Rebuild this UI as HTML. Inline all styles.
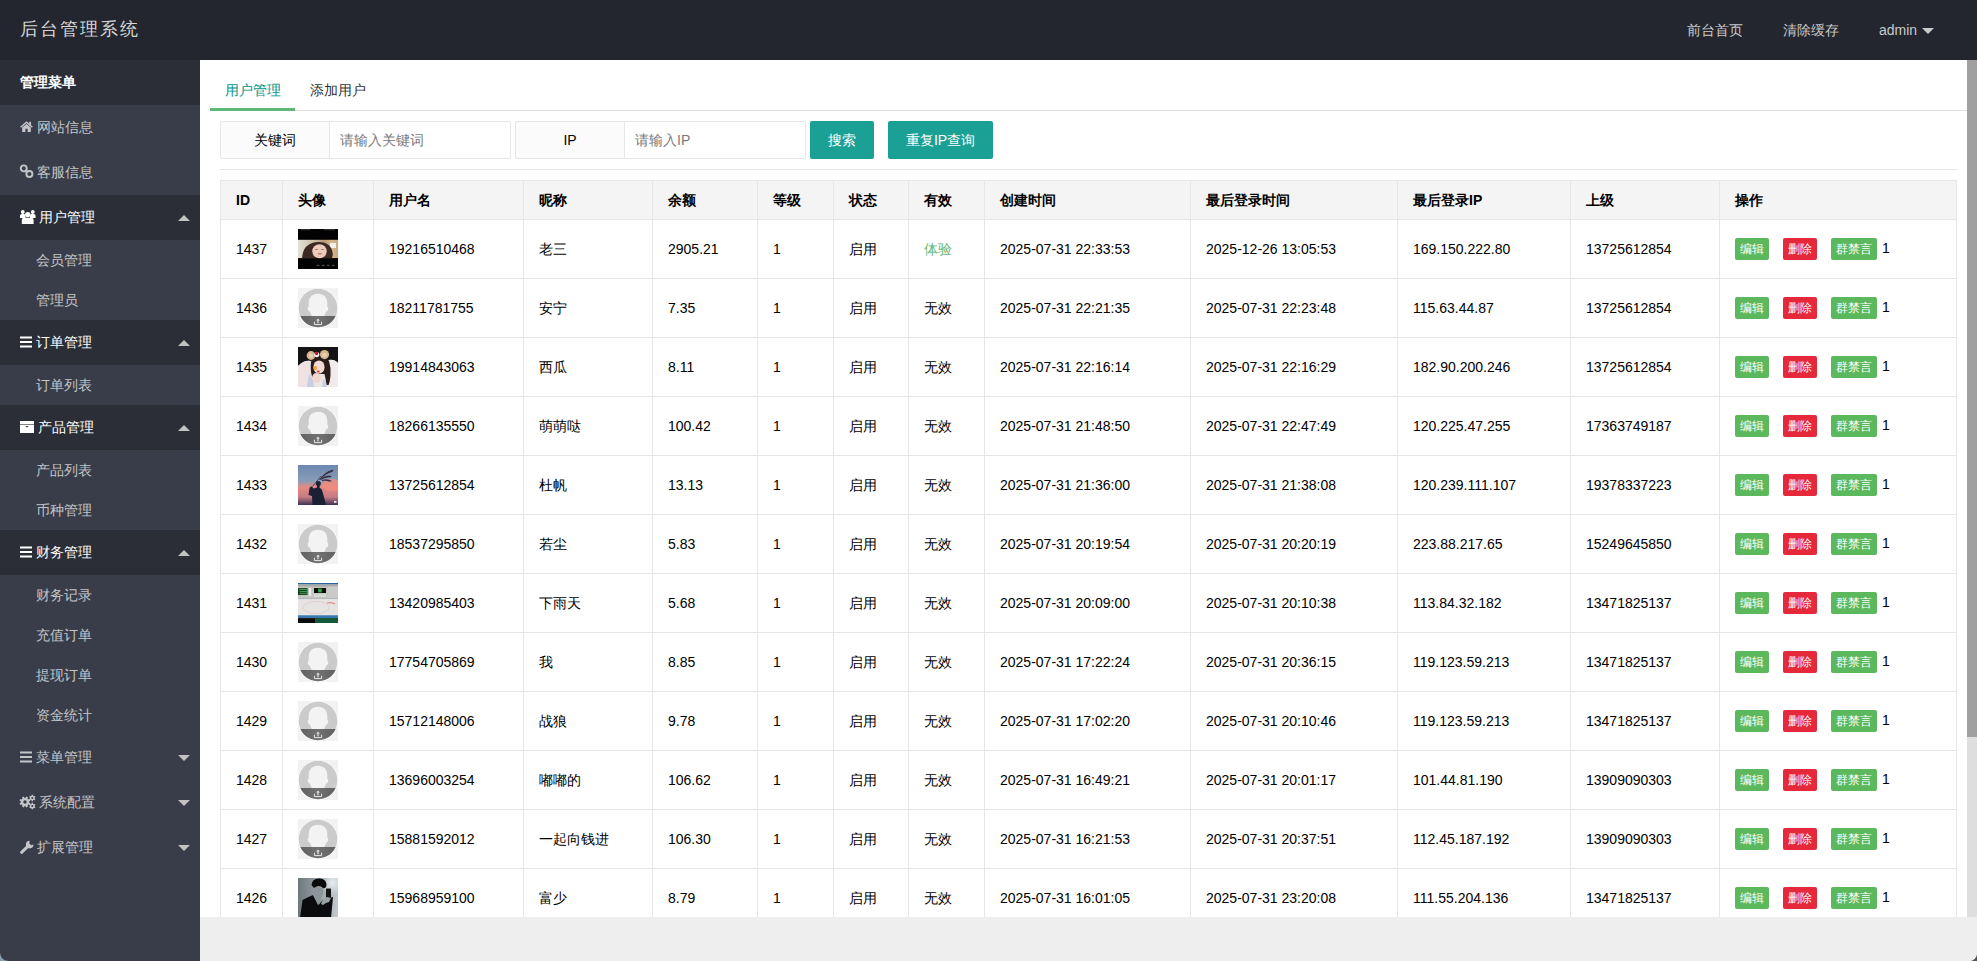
<!DOCTYPE html>
<html><head><meta charset="utf-8">
<style>
*{margin:0;padding:0;box-sizing:border-box}
html,body{width:1977px;height:961px;overflow:hidden;background:linear-gradient(to right,#8aa0b4 0,#8aa0b4 50%,#555 50%,#555 100%)}
body{font-family:"Liberation Sans",sans-serif;font-size:14px;color:#333;position:relative}
#win{position:absolute;left:0;top:0;width:1977px;height:961px;overflow:hidden;border-radius:0 0 8px 8px;background:#eee}
#hdr{position:absolute;left:0;top:0;width:1977px;height:60px;background:#23262e}
#logo{position:absolute;left:20px;top:17px;font-size:18px;letter-spacing:2px;color:#d6d6d6;line-height:24px;white-space:nowrap}
.hn{position:absolute;top:20px;line-height:20px;color:#c9cacc;font-size:14px;white-space:nowrap}
#side{position:absolute;left:0;top:60px;width:200px;height:901px;background:#393d49}
.si{position:absolute;left:0;width:200px;color:#c4c5c8;line-height:20px;white-space:nowrap}
.si.dk{background:#2b2e37;color:#fff}
.si span{position:absolute;top:0}
.ico{position:absolute}
.tri{position:absolute;width:0;height:0;border-left:6px solid transparent;border-right:6px solid transparent}
#body{position:absolute;left:200px;top:60px;width:1767px;height:857px;background:#fff;overflow:hidden}
.hl{position:absolute;left:20px;width:1737px;height:1px;background:#e6e6e6}
.vl{position:absolute;top:120px;width:1px;height:740px;background:#e6e6e6}
.th{position:absolute;line-height:20px;font-weight:bold;color:#000;white-space:nowrap}
.td{position:absolute;line-height:20px;color:#000;white-space:nowrap}
.av{position:absolute;width:40px;height:40px;line-height:0;overflow:hidden}

.btn{position:absolute;height:22px;line-height:22px;font-size:12px;color:#fff;text-align:center;border-radius:2px;white-space:nowrap}
.btn.g{background:#5cb85c}
.btn.r{background:#e5283a}
.fbox{position:absolute;top:61px;height:38px;border:1px solid #e6e6e6;border-radius:2px;background:#fff}
.flab{position:absolute;top:61px;height:38px;width:110px;border:1px solid #e6e6e6;border-radius:2px 0 0 2px;background:#fbfbfb;text-align:center;line-height:36px;color:#000}
.ph{position:absolute;top:0;left:10px;line-height:36px;color:#7a7a7a;white-space:nowrap}
.sbtn{position:absolute;top:61px;height:38px;line-height:38px;background:#1aa094;color:#fff;text-align:center;border-radius:2px;white-space:nowrap}
#sb{position:absolute;left:1967px;top:60px;width:10px;height:857px;background:#dedede}
#thumb{position:absolute;left:0;top:0;width:10px;height:677px;background:#a0a0a0}
#foot{position:absolute;left:200px;top:917px;width:1777px;height:44px;background:#eeeeee}
</style></head><body>
<div id="win">
<div id="hdr">
  <div id="logo">后台管理系统</div>
  <div class="hn" style="left:1687px">前台首页</div>
  <div class="hn" style="left:1783px">清除缓存</div>
  <div class="hn" style="left:1879px">admin</div>
  <div class="tri" style="left:1922px;top:28px;border-top:6px solid #c9cacc"></div>
</div>
<div id="side">
  <div class="si dk" style="top:0;height:45px;color:#fff"><span style="left:20px;top:12px;font-weight:bold">管理菜单</span></div>
  <div class="si" style="top:45px;height:45px">
    <svg class="ico" style="left:20px;top:16px;overflow:visible" width="13" height="11" viewBox="0 0 13 11"><path d="M0.6 6.2 L6.5 1.2 L12.4 6.2" stroke="#c4c5c8" stroke-width="1.5" fill="none"/><rect x="9.2" y="0.8" width="1.8" height="3.6" fill="#c4c5c8"/><path d="M2.2 6.6 L6.5 3 L10.8 6.6 L10.8 11 L7.6 11 L7.6 7.8 L5.4 7.8 L5.4 11 L2.2 11 Z" fill="#c4c5c8"/></svg>
    <span style="left:37px;top:12px">网站信息</span></div>
  <div class="si" style="top:90px;height:45px">
    <svg class="ico" style="left:20px;top:15px;overflow:visible" width="13" height="13" viewBox="0 0 13 13"><g fill="none" stroke="#c4c5c8" stroke-width="1.9"><circle cx="3.75" cy="3.4" r="3"/><circle cx="9.4" cy="9" r="3"/></g></svg>
    <span style="left:37px;top:12px">客服信息</span></div>
  <div class="si dk" style="top:135px;height:45px">
    <svg class="ico" style="left:20px;top:15px;overflow:visible" width="16" height="14" viewBox="0 0 16 14"><g fill="#fff"><circle cx="2.8" cy="2" r="1.9"/><circle cx="12.8" cy="2" r="1.9"/><path d="M0 8 V6 Q0 4 2 4 H4 Q5.5 4 5.5 6 V8 Z"/><path d="M10 8 V6 Q10 4 11.5 4 H13.6 Q15.6 4 15.6 6 V8 Z"/><circle cx="7.8" cy="4.6" r="2.7"/><path d="M1.8 14 V10 Q1.8 7.8 4 7.8 H11.6 Q13.6 7.8 13.6 10 V14 Z"/></g></svg>
    <span style="left:39px;top:12px">用户管理</span>
    <div class="tri" style="left:178px;top:20px;border-bottom:6px solid #c2c2c2"></div></div>
  <div class="si" style="top:180px;height:40px"><span style="left:36px;top:10px">会员管理</span></div>
  <div class="si" style="top:220px;height:40px"><span style="left:36px;top:10px">管理员</span></div>
  <div class="si dk" style="top:260px;height:45px">
    <svg class="ico" style="left:20px;top:16px" width="12" height="12" viewBox="0 0 12 12"><g fill="#fff"><rect y="0.5" width="12" height="2"/><rect y="5" width="12" height="2"/><rect y="9.5" width="12" height="2"/></g></svg>
    <span style="left:36px;top:12px">订单管理</span>
    <div class="tri" style="left:178px;top:20px;border-bottom:6px solid #c2c2c2"></div></div>
  <div class="si" style="top:305px;height:40px"><span style="left:36px;top:10px">订单列表</span></div>
  <div class="si dk" style="top:345px;height:45px">
    <svg class="ico" style="left:20px;top:16px" width="14" height="12" viewBox="0 0 14 12"><g fill="#fff"><rect x="0" y="0" width="14" height="3"/><rect x="0" y="3.6" width="14" height="8.4"/></g><ellipse cx="7" cy="5.6" rx="1.4" ry="0.6" fill="#2b2e37"/></svg>
    <span style="left:38px;top:12px">产品管理</span>
    <div class="tri" style="left:178px;top:20px;border-bottom:6px solid #c2c2c2"></div></div>
  <div class="si" style="top:390px;height:40px"><span style="left:36px;top:10px">产品列表</span></div>
  <div class="si" style="top:430px;height:40px"><span style="left:36px;top:10px">币种管理</span></div>
  <div class="si dk" style="top:470px;height:45px">
    <svg class="ico" style="left:20px;top:16px" width="12" height="12" viewBox="0 0 12 12"><g fill="#fff"><rect y="0.5" width="12" height="2"/><rect y="5" width="12" height="2"/><rect y="9.5" width="12" height="2"/></g></svg>
    <span style="left:36px;top:12px">财务管理</span>
    <div class="tri" style="left:178px;top:20px;border-bottom:6px solid #c2c2c2"></div></div>
  <div class="si" style="top:515px;height:40px"><span style="left:36px;top:10px">财务记录</span></div>
  <div class="si" style="top:555px;height:40px"><span style="left:36px;top:10px">充值订单</span></div>
  <div class="si" style="top:595px;height:40px"><span style="left:36px;top:10px">提现订单</span></div>
  <div class="si" style="top:635px;height:40px"><span style="left:36px;top:10px">资金统计</span></div>
  <div class="si" style="top:675px;height:45px">
    <svg class="ico" style="left:20px;top:16px" width="12" height="12" viewBox="0 0 12 12"><g fill="#c4c5c8"><rect y="0.5" width="12" height="2"/><rect y="5" width="12" height="2"/><rect y="9.5" width="12" height="2"/></g></svg>
    <span style="left:36px;top:12px">菜单管理</span>
    <div class="tri" style="left:178px;top:20px;border-top:6px solid #c2c2c2"></div></div>
  <div class="si" style="top:720px;height:45px">
    <svg class="ico" style="left:20px;top:16px;overflow:visible" width="16" height="12" viewBox="0 0 16 12"><g fill="#c4c5c8"><path d="M9.30 6.00 L9.25 6.67 L10.45 7.31 L9.77 8.93 L8.48 8.53 L8.04 9.04 L7.53 9.48 L7.93 10.77 L6.31 11.45 L5.67 10.25 L5.00 10.30 L4.33 10.25 L3.69 11.45 L2.07 10.77 L2.47 9.48 L1.96 9.04 L1.52 8.53 L0.23 8.93 L-0.45 7.31 L0.75 6.67 L0.70 6.00 L0.75 5.33 L-0.45 4.69 L0.23 3.07 L1.52 3.47 L1.96 2.96 L2.47 2.52 L2.07 1.23 L3.69 0.55 L4.33 1.75 L5.00 1.70 L5.67 1.75 L6.31 0.55 L7.93 1.23 L7.53 2.52 L8.04 2.96 L8.48 3.47 L9.77 3.07 L10.45 4.69 L9.25 5.33 Z M5 4.3 A1.7 1.7 0 1 0 5 7.7 A1.7 1.7 0 1 0 5 4.3 Z" fill-rule="evenodd"/><path d="M14.70 2.00 L14.65 2.50 L15.44 3.02 L14.75 4.21 L13.91 3.78 L13.50 4.08 L13.04 4.28 L12.99 5.23 L11.61 5.23 L11.56 4.28 L11.10 4.08 L10.69 3.78 L9.85 4.21 L9.16 3.02 L9.95 2.50 L9.90 2.00 L9.95 1.50 L9.16 0.98 L9.85 -0.21 L10.69 0.22 L11.10 -0.08 L11.56 -0.28 L11.61 -1.23 L12.99 -1.23 L13.04 -0.28 L13.50 -0.08 L13.91 0.22 L14.75 -0.21 L15.44 0.98 L14.65 1.50 Z M12.3 1 A1 1 0 1 0 12.3 3 A1 1 0 1 0 12.3 1 Z" fill-rule="evenodd"/><path d="M14.70 10.10 L14.65 10.60 L15.44 11.12 L14.75 12.31 L13.91 11.88 L13.50 12.18 L13.04 12.38 L12.99 13.33 L11.61 13.33 L11.56 12.38 L11.10 12.18 L10.69 11.88 L9.85 12.31 L9.16 11.12 L9.95 10.60 L9.90 10.10 L9.95 9.60 L9.16 9.08 L9.85 7.89 L10.69 8.32 L11.10 8.02 L11.56 7.82 L11.61 6.87 L12.99 6.87 L13.04 7.82 L13.50 8.02 L13.91 8.32 L14.75 7.89 L15.44 9.08 L14.65 9.60 Z M12.3 9.1 A1 1 0 1 0 12.3 11.1 A1 1 0 1 0 12.3 9.1 Z" fill-rule="evenodd"/></g></svg>
    <span style="left:39px;top:12px">系统配置</span>
    <div class="tri" style="left:178px;top:20px;border-top:6px solid #c2c2c2"></div></div>
  <div class="si" style="top:765px;height:45px">
    <svg class="ico" style="left:20px;top:15px;overflow:visible" width="14" height="14" viewBox="0 0 14 14"><path d="M1.6 12.3 L7.8 6.4" stroke="#c4c5c8" stroke-width="3" stroke-linecap="round"/><path d="M9.7 0.8 A3.8 3.8 0 1 0 13.5 4.6 L11.2 5.2 L9.2 3.2 Z" fill="#c4c5c8"/></svg>
    <span style="left:37px;top:12px">扩展管理</span>
    <div class="tri" style="left:178px;top:20px;border-top:6px solid #c2c2c2"></div></div>
</div>
<div id="body">
  <div style="position:absolute;left:25px;top:20px;line-height:20px;color:#009688">用户管理</div>
  <div style="position:absolute;left:110px;top:20px;line-height:20px;color:#333">添加用户</div>
  <div style="position:absolute;left:10px;top:50px;width:1757px;height:1px;background:#e2e2e2"></div>
  <div style="position:absolute;left:10px;top:48px;width:85px;height:3px;background:#5fb878"></div>

  <div class="fbox" style="left:20px;width:291px"></div>
  <div class="flab" style="left:20px">关键词</div>
  <div class="fbox" style="left:129px;width:182px;border-radius:0 2px 2px 0"><div class="ph">请输入关键词</div></div>
  <div class="fbox" style="left:315px;width:291px"></div>
  <div class="flab" style="left:315px">IP</div>
  <div class="fbox" style="left:424px;width:182px;border-radius:0 2px 2px 0"><div class="ph">请输入IP</div></div>
  <div class="sbtn" style="left:610px;width:64px">搜索</div>
  <div class="sbtn" style="left:688px;width:105px">重复IP查询</div>
  <div style="position:absolute;left:20px;top:109px;width:1737px;height:1px;background:#e6e6e6"></div>
<div style="position:absolute;left:20px;top:120px;width:1737px;height:40px;background:#f4f4f4"></div>
<div class="th" style="left:36px;top:130px">ID</div>
<div class="th" style="left:98px;top:130px">头像</div>
<div class="th" style="left:189px;top:130px">用户名</div>
<div class="th" style="left:339px;top:130px">昵称</div>
<div class="th" style="left:468px;top:130px">余额</div>
<div class="th" style="left:573px;top:130px">等级</div>
<div class="th" style="left:649px;top:130px">状态</div>
<div class="th" style="left:724px;top:130px">有效</div>
<div class="th" style="left:800px;top:130px">创建时间</div>
<div class="th" style="left:1006px;top:130px">最后登录时间</div>
<div class="th" style="left:1213px;top:130px">最后登录IP</div>
<div class="th" style="left:1386px;top:130px">上级</div>
<div class="th" style="left:1535px;top:130px">操作</div>
<div class="td" style="left:36px;top:179px;">1437</div>
<div class="av" style="left:98px;top:169px"><svg class="ph40" width="40" height="40" viewBox="0 0 40 40"><rect width="40" height="40" fill="#020202"/><defs><linearGradient id="g1" x1="0" x2="1"><stop offset="0" stop-color="#e2e0d6"/><stop offset="0.35" stop-color="#cfc4ae"/><stop offset="0.65" stop-color="#b89a78"/><stop offset="0.85" stop-color="#d8b88a"/><stop offset="1" stop-color="#c8a880"/></linearGradient></defs><rect y="10.8" width="40" height="18.3" fill="url(#g1)"/><rect x="32" y="14" width="6" height="5" fill="#f2f0ea"/><path d="M4 29.1 Q5 20 9 17 Q14 12.5 22 13 Q30 13.5 33 19 Q36 24 34 29.1 Z" fill="#3c2a22"/><ellipse cx="21.5" cy="22.3" rx="7.2" ry="7" fill="#eccabc"/><ellipse cx="18.5" cy="20.5" rx="1.3" ry="0.6" fill="#8a6a60"/><ellipse cx="24.5" cy="20.5" rx="1.3" ry="0.6" fill="#8a6a60"/><ellipse cx="21.8" cy="24.8" rx="2.2" ry="1" fill="#c98c84"/><rect x="3" y="0.3" width="9" height="0.9" fill="#444"/><rect x="26" y="0.3" width="11" height="0.9" fill="#444"/><g fill="#4a4a4a"><rect x="18.5" y="35.7" width="3" height="1.3" rx="0.6"/><rect x="23.8" y="35.7" width="3" height="1.3" rx="0.6"/><rect x="28.8" y="35.7" width="3" height="1.3" rx="0.6"/><rect x="33.8" y="35.7" width="3" height="1.3" rx="0.6"/></g></svg></div>
<div class="td" style="left:189px;top:179px;">19216510468</div>
<div class="td" style="left:339px;top:179px;">老三</div>
<div class="td" style="left:468px;top:179px;">2905.21</div>
<div class="td" style="left:573px;top:179px;">1</div>
<div class="td" style="left:649px;top:179px;">启用</div>
<div class="td" style="left:724px;top:179px;color:#5FB878;">体验</div>
<div class="td" style="left:800px;top:179px;">2025-07-31 22:33:53</div>
<div class="td" style="left:1006px;top:179px;">2025-12-26 13:05:53</div>
<div class="td" style="left:1213px;top:179px;">169.150.222.80</div>
<div class="td" style="left:1386px;top:179px;">13725612854</div>
<div class="btn g" style="left:1535px;top:178px;width:34px">编辑</div>
<div class="btn r" style="left:1583px;top:178px;width:34px">删除</div>
<div class="btn g" style="left:1631px;top:178px;width:46px">群禁言</div>
<div class="td" style="left:1682px;top:178px">1</div>
<div class="td" style="left:36px;top:238px;">1436</div>
<div class="av" style="left:98px;top:228px"><svg width="40" height="40" viewBox="0 0 40 40"><rect width="40" height="40" fill="#f2f2f2"/><circle cx="20" cy="20" r="20" fill="#fafafa"/><defs><clipPath id="cc"><circle cx="20" cy="20" r="19.3"/></clipPath><linearGradient id="bd" x1="0" x2="1"><stop offset="0" stop-color="#5e5e5e"/><stop offset="0.5" stop-color="#727272"/><stop offset="1" stop-color="#5e5e5e"/></linearGradient></defs><g clip-path="url(#cc)"><rect width="40" height="40" fill="#cbcbcb"/><path d="M20 5.7 C26 5.7 29.3 9.5 29.3 15 L29.3 18.5 Q30.6 19 30.2 21.5 Q29.7 23.6 28.2 23.6 Q27.2 26.5 26.2 28 L13.8 28 Q12.8 26.5 11.8 23.6 Q10.3 23.6 9.8 21.5 Q9.4 19 10.7 18.5 L10.7 15 C10.7 9.5 14 5.7 20 5.7 Z" fill="#f3f3f3"/><rect y="28" width="40" height="12" fill="url(#bd)"/><path d="M16.4 33.8 v2.8 h7.2 v-2.8" stroke="#e6e6e6" stroke-width="1" fill="none"/><path d="M20 35.2 v-3.6" stroke="#e6e6e6" stroke-width="1.2"/><path d="M18.1 32.6 L20 30.7 L21.9 32.6 Z" fill="#e6e6e6"/></g></svg></div>
<div class="td" style="left:189px;top:238px;">18211781755</div>
<div class="td" style="left:339px;top:238px;">安宁</div>
<div class="td" style="left:468px;top:238px;">7.35</div>
<div class="td" style="left:573px;top:238px;">1</div>
<div class="td" style="left:649px;top:238px;">启用</div>
<div class="td" style="left:724px;top:238px;">无效</div>
<div class="td" style="left:800px;top:238px;">2025-07-31 22:21:35</div>
<div class="td" style="left:1006px;top:238px;">2025-07-31 22:23:48</div>
<div class="td" style="left:1213px;top:238px;">115.63.44.87</div>
<div class="td" style="left:1386px;top:238px;">13725612854</div>
<div class="btn g" style="left:1535px;top:237px;width:34px">编辑</div>
<div class="btn r" style="left:1583px;top:237px;width:34px">删除</div>
<div class="btn g" style="left:1631px;top:237px;width:46px">群禁言</div>
<div class="td" style="left:1682px;top:237px">1</div>
<div class="td" style="left:36px;top:297px;">1435</div>
<div class="av" style="left:98px;top:287px"><svg class="ph40" width="40" height="40" viewBox="0 0 40 40"><rect width="40" height="40" fill="#f0e6e6"/><path d="M0 0 H40 V16 Q36 12 32 13 L12 14 Q6 13 0 19 Z" fill="#141414"/><path d="M0 19 Q6 13 13 14 L15 40 H0 Z" fill="#eee2e2"/><path d="M40 16 Q36 12 30 13 L29 40 H40 Z" fill="#f3eaec"/><path d="M13 15 Q14 10 20 10 Q29 10 31 14 Q33 20 32.5 28 Q32 35 30.5 38 L28.5 38 Q27.5 31 26.5 27 L16 27 Q16 30 14.5 31 Q12 24 13 15 Z" fill="#2a1c1b"/><circle cx="13" cy="8.5" r="4.4" fill="#d6b68e"/><circle cx="26.5" cy="7.6" r="4.6" fill="#d6b68e"/><circle cx="13" cy="8.8" r="2.2" fill="#e4d0b4"/><circle cx="26.5" cy="8" r="2.3" fill="#e4d0b4"/><circle cx="18.8" cy="7.6" r="2.6" fill="#f2eeee"/><circle cx="18.6" cy="6.4" r="1.7" fill="#c41428"/><ellipse cx="21" cy="20" rx="5.6" ry="6.6" fill="#f3dad2"/><circle cx="17.3" cy="21" r="1.9" fill="#f0a048"/><ellipse cx="20.3" cy="24.6" rx="1.5" ry="1" fill="#d44434"/><ellipse cx="18.5" cy="31" rx="4.5" ry="5" fill="#f0d6ce"/><path d="M9 40 L11 27 Q14 30 15 34 L16 40 Z" fill="#c4cee6"/><path d="M24 40 L25 32 Q28 33 29 40 Z" fill="#c8d2e6"/></svg></div>
<div class="td" style="left:189px;top:297px;">19914843063</div>
<div class="td" style="left:339px;top:297px;">西瓜</div>
<div class="td" style="left:468px;top:297px;">8.11</div>
<div class="td" style="left:573px;top:297px;">1</div>
<div class="td" style="left:649px;top:297px;">启用</div>
<div class="td" style="left:724px;top:297px;">无效</div>
<div class="td" style="left:800px;top:297px;">2025-07-31 22:16:14</div>
<div class="td" style="left:1006px;top:297px;">2025-07-31 22:16:29</div>
<div class="td" style="left:1213px;top:297px;">182.90.200.246</div>
<div class="td" style="left:1386px;top:297px;">13725612854</div>
<div class="btn g" style="left:1535px;top:296px;width:34px">编辑</div>
<div class="btn r" style="left:1583px;top:296px;width:34px">删除</div>
<div class="btn g" style="left:1631px;top:296px;width:46px">群禁言</div>
<div class="td" style="left:1682px;top:296px">1</div>
<div class="td" style="left:36px;top:356px;">1434</div>
<div class="av" style="left:98px;top:346px"><svg width="40" height="40" viewBox="0 0 40 40"><rect width="40" height="40" fill="#f2f2f2"/><circle cx="20" cy="20" r="20" fill="#fafafa"/><defs><clipPath id="cc"><circle cx="20" cy="20" r="19.3"/></clipPath><linearGradient id="bd" x1="0" x2="1"><stop offset="0" stop-color="#5e5e5e"/><stop offset="0.5" stop-color="#727272"/><stop offset="1" stop-color="#5e5e5e"/></linearGradient></defs><g clip-path="url(#cc)"><rect width="40" height="40" fill="#cbcbcb"/><path d="M20 5.7 C26 5.7 29.3 9.5 29.3 15 L29.3 18.5 Q30.6 19 30.2 21.5 Q29.7 23.6 28.2 23.6 Q27.2 26.5 26.2 28 L13.8 28 Q12.8 26.5 11.8 23.6 Q10.3 23.6 9.8 21.5 Q9.4 19 10.7 18.5 L10.7 15 C10.7 9.5 14 5.7 20 5.7 Z" fill="#f3f3f3"/><rect y="28" width="40" height="12" fill="url(#bd)"/><path d="M16.4 33.8 v2.8 h7.2 v-2.8" stroke="#e6e6e6" stroke-width="1" fill="none"/><path d="M20 35.2 v-3.6" stroke="#e6e6e6" stroke-width="1.2"/><path d="M18.1 32.6 L20 30.7 L21.9 32.6 Z" fill="#e6e6e6"/></g></svg></div>
<div class="td" style="left:189px;top:356px;">18266135550</div>
<div class="td" style="left:339px;top:356px;">萌萌哒</div>
<div class="td" style="left:468px;top:356px;">100.42</div>
<div class="td" style="left:573px;top:356px;">1</div>
<div class="td" style="left:649px;top:356px;">启用</div>
<div class="td" style="left:724px;top:356px;">无效</div>
<div class="td" style="left:800px;top:356px;">2025-07-31 21:48:50</div>
<div class="td" style="left:1006px;top:356px;">2025-07-31 22:47:49</div>
<div class="td" style="left:1213px;top:356px;">120.225.47.255</div>
<div class="td" style="left:1386px;top:356px;">17363749187</div>
<div class="btn g" style="left:1535px;top:355px;width:34px">编辑</div>
<div class="btn r" style="left:1583px;top:355px;width:34px">删除</div>
<div class="btn g" style="left:1631px;top:355px;width:46px">群禁言</div>
<div class="td" style="left:1682px;top:355px">1</div>
<div class="td" style="left:36px;top:415px;">1433</div>
<div class="av" style="left:98px;top:405px"><svg class="ph40" width="40" height="40" viewBox="0 0 40 40"><defs><linearGradient id="g3" x1="0" y1="0" x2="0" y2="1"><stop offset="0" stop-color="#6c88b2"/><stop offset="0.4" stop-color="#8a9cb8"/><stop offset="0.55" stop-color="#e48c84"/><stop offset="0.8" stop-color="#c87a84"/><stop offset="1" stop-color="#3e3452"/></linearGradient></defs><rect width="40" height="40" fill="url(#g3)"/><ellipse cx="34" cy="20" rx="10" ry="6" fill="#f48c7c" opacity="0.8"/><path d="M10.5 30 L11.5 23 Q12 21 14 21.5 L15.5 23.5 Q18 22.5 20 22.5 Q23 22.5 24 25 L26 32 L28 40 L14.5 40 L14 31 Z" fill="#1c2034"/><circle cx="20.3" cy="18.6" r="2.5" fill="#1c2034"/><rect x="19" y="20" width="2.6" height="3" fill="#1c2034"/><path d="M14.5 21.5 L23 11" stroke="#3a3450" stroke-width="0.8"/><path d="M21 15 Q26 7 35 4.5 Q36 6 34 7 Q27 9 22 15 Z" fill="#3a3048"/><path d="M22 14 Q28 9 34 11 Q33 12.5 30 12.5 Q26 12.5 23 15 Z" fill="#3a3048"/><path d="M24 15 Q29 13 34 16 Q32 17 29 16 Q26 15.5 24 16 Z" fill="#3c3048"/><rect x="36" y="36" width="2.5" height="1.8" fill="#e8e8e8"/></svg></div>
<div class="td" style="left:189px;top:415px;">13725612854</div>
<div class="td" style="left:339px;top:415px;">杜帆</div>
<div class="td" style="left:468px;top:415px;">13.13</div>
<div class="td" style="left:573px;top:415px;">1</div>
<div class="td" style="left:649px;top:415px;">启用</div>
<div class="td" style="left:724px;top:415px;">无效</div>
<div class="td" style="left:800px;top:415px;">2025-07-31 21:36:00</div>
<div class="td" style="left:1006px;top:415px;">2025-07-31 21:38:08</div>
<div class="td" style="left:1213px;top:415px;">120.239.111.107</div>
<div class="td" style="left:1386px;top:415px;">19378337223</div>
<div class="btn g" style="left:1535px;top:414px;width:34px">编辑</div>
<div class="btn r" style="left:1583px;top:414px;width:34px">删除</div>
<div class="btn g" style="left:1631px;top:414px;width:46px">群禁言</div>
<div class="td" style="left:1682px;top:414px">1</div>
<div class="td" style="left:36px;top:474px;">1432</div>
<div class="av" style="left:98px;top:464px"><svg width="40" height="40" viewBox="0 0 40 40"><rect width="40" height="40" fill="#f2f2f2"/><circle cx="20" cy="20" r="20" fill="#fafafa"/><defs><clipPath id="cc"><circle cx="20" cy="20" r="19.3"/></clipPath><linearGradient id="bd" x1="0" x2="1"><stop offset="0" stop-color="#5e5e5e"/><stop offset="0.5" stop-color="#727272"/><stop offset="1" stop-color="#5e5e5e"/></linearGradient></defs><g clip-path="url(#cc)"><rect width="40" height="40" fill="#cbcbcb"/><path d="M20 5.7 C26 5.7 29.3 9.5 29.3 15 L29.3 18.5 Q30.6 19 30.2 21.5 Q29.7 23.6 28.2 23.6 Q27.2 26.5 26.2 28 L13.8 28 Q12.8 26.5 11.8 23.6 Q10.3 23.6 9.8 21.5 Q9.4 19 10.7 18.5 L10.7 15 C10.7 9.5 14 5.7 20 5.7 Z" fill="#f3f3f3"/><rect y="28" width="40" height="12" fill="url(#bd)"/><path d="M16.4 33.8 v2.8 h7.2 v-2.8" stroke="#e6e6e6" stroke-width="1" fill="none"/><path d="M20 35.2 v-3.6" stroke="#e6e6e6" stroke-width="1.2"/><path d="M18.1 32.6 L20 30.7 L21.9 32.6 Z" fill="#e6e6e6"/></g></svg></div>
<div class="td" style="left:189px;top:474px;">18537295850</div>
<div class="td" style="left:339px;top:474px;">若尘</div>
<div class="td" style="left:468px;top:474px;">5.83</div>
<div class="td" style="left:573px;top:474px;">1</div>
<div class="td" style="left:649px;top:474px;">启用</div>
<div class="td" style="left:724px;top:474px;">无效</div>
<div class="td" style="left:800px;top:474px;">2025-07-31 20:19:54</div>
<div class="td" style="left:1006px;top:474px;">2025-07-31 20:20:19</div>
<div class="td" style="left:1213px;top:474px;">223.88.217.65</div>
<div class="td" style="left:1386px;top:474px;">15249645850</div>
<div class="btn g" style="left:1535px;top:473px;width:34px">编辑</div>
<div class="btn r" style="left:1583px;top:473px;width:34px">删除</div>
<div class="btn g" style="left:1631px;top:473px;width:46px">群禁言</div>
<div class="td" style="left:1682px;top:473px">1</div>
<div class="td" style="left:36px;top:533px;">1431</div>
<div class="av" style="left:98px;top:523px"><svg class="ph40" width="40" height="40" viewBox="0 0 40 40"><rect width="40" height="40" fill="#dedcd8"/><rect width="40" height="1.6" fill="#2a64a0"/><rect y="1.6" width="40" height="13.4" fill="#c4c6c0"/><rect y="1.6" width="40" height="2" fill="#a8aaa6"/><rect x="0" y="5" width="9.5" height="7" fill="#1a3a22"/><rect x="1" y="5.8" width="8" height="1.2" fill="#3c9a50"/><rect x="1.5" y="8" width="7.5" height="1.2" fill="#3c9a50"/><rect x="1.5" y="10.2" width="7.5" height="1" fill="#3c9a50"/><rect x="11" y="5" width="2.2" height="8" fill="#eaeee8"/><rect x="16" y="5" width="12" height="5" fill="#0c0c0c"/><rect x="20" y="5.6" width="3.8" height="3.8" fill="#2ea040"/><rect x="16" y="11" width="12" height="3" fill="#d6d8d4"/><rect x="30" y="3.6" width="10" height="11" fill="#cacac8"/><rect y="15" width="40" height="1.2" fill="#b4b6c0"/><rect y="16.2" width="40" height="16" fill="#e6e4e2"/><ellipse cx="18" cy="24.5" rx="13" ry="6" fill="none" stroke="#d4bcbc" stroke-width="0.5"/><path d="M29 20 Q33 19 37 21" stroke="#e88888" stroke-width="1.2" fill="none"/><rect y="32.3" width="40" height="2.8" fill="#3a78b0"/><rect y="35.1" width="40" height="4.9" fill="#0a0c0a"/><rect x="17" y="35.1" width="23" height="4.9" fill="#16583a"/></svg></div>
<div class="td" style="left:189px;top:533px;">13420985403</div>
<div class="td" style="left:339px;top:533px;">下雨天</div>
<div class="td" style="left:468px;top:533px;">5.68</div>
<div class="td" style="left:573px;top:533px;">1</div>
<div class="td" style="left:649px;top:533px;">启用</div>
<div class="td" style="left:724px;top:533px;">无效</div>
<div class="td" style="left:800px;top:533px;">2025-07-31 20:09:00</div>
<div class="td" style="left:1006px;top:533px;">2025-07-31 20:10:38</div>
<div class="td" style="left:1213px;top:533px;">113.84.32.182</div>
<div class="td" style="left:1386px;top:533px;">13471825137</div>
<div class="btn g" style="left:1535px;top:532px;width:34px">编辑</div>
<div class="btn r" style="left:1583px;top:532px;width:34px">删除</div>
<div class="btn g" style="left:1631px;top:532px;width:46px">群禁言</div>
<div class="td" style="left:1682px;top:532px">1</div>
<div class="td" style="left:36px;top:592px;">1430</div>
<div class="av" style="left:98px;top:582px"><svg width="40" height="40" viewBox="0 0 40 40"><rect width="40" height="40" fill="#f2f2f2"/><circle cx="20" cy="20" r="20" fill="#fafafa"/><defs><clipPath id="cc"><circle cx="20" cy="20" r="19.3"/></clipPath><linearGradient id="bd" x1="0" x2="1"><stop offset="0" stop-color="#5e5e5e"/><stop offset="0.5" stop-color="#727272"/><stop offset="1" stop-color="#5e5e5e"/></linearGradient></defs><g clip-path="url(#cc)"><rect width="40" height="40" fill="#cbcbcb"/><path d="M20 5.7 C26 5.7 29.3 9.5 29.3 15 L29.3 18.5 Q30.6 19 30.2 21.5 Q29.7 23.6 28.2 23.6 Q27.2 26.5 26.2 28 L13.8 28 Q12.8 26.5 11.8 23.6 Q10.3 23.6 9.8 21.5 Q9.4 19 10.7 18.5 L10.7 15 C10.7 9.5 14 5.7 20 5.7 Z" fill="#f3f3f3"/><rect y="28" width="40" height="12" fill="url(#bd)"/><path d="M16.4 33.8 v2.8 h7.2 v-2.8" stroke="#e6e6e6" stroke-width="1" fill="none"/><path d="M20 35.2 v-3.6" stroke="#e6e6e6" stroke-width="1.2"/><path d="M18.1 32.6 L20 30.7 L21.9 32.6 Z" fill="#e6e6e6"/></g></svg></div>
<div class="td" style="left:189px;top:592px;">17754705869</div>
<div class="td" style="left:339px;top:592px;">我</div>
<div class="td" style="left:468px;top:592px;">8.85</div>
<div class="td" style="left:573px;top:592px;">1</div>
<div class="td" style="left:649px;top:592px;">启用</div>
<div class="td" style="left:724px;top:592px;">无效</div>
<div class="td" style="left:800px;top:592px;">2025-07-31 17:22:24</div>
<div class="td" style="left:1006px;top:592px;">2025-07-31 20:36:15</div>
<div class="td" style="left:1213px;top:592px;">119.123.59.213</div>
<div class="td" style="left:1386px;top:592px;">13471825137</div>
<div class="btn g" style="left:1535px;top:591px;width:34px">编辑</div>
<div class="btn r" style="left:1583px;top:591px;width:34px">删除</div>
<div class="btn g" style="left:1631px;top:591px;width:46px">群禁言</div>
<div class="td" style="left:1682px;top:591px">1</div>
<div class="td" style="left:36px;top:651px;">1429</div>
<div class="av" style="left:98px;top:641px"><svg width="40" height="40" viewBox="0 0 40 40"><rect width="40" height="40" fill="#f2f2f2"/><circle cx="20" cy="20" r="20" fill="#fafafa"/><defs><clipPath id="cc"><circle cx="20" cy="20" r="19.3"/></clipPath><linearGradient id="bd" x1="0" x2="1"><stop offset="0" stop-color="#5e5e5e"/><stop offset="0.5" stop-color="#727272"/><stop offset="1" stop-color="#5e5e5e"/></linearGradient></defs><g clip-path="url(#cc)"><rect width="40" height="40" fill="#cbcbcb"/><path d="M20 5.7 C26 5.7 29.3 9.5 29.3 15 L29.3 18.5 Q30.6 19 30.2 21.5 Q29.7 23.6 28.2 23.6 Q27.2 26.5 26.2 28 L13.8 28 Q12.8 26.5 11.8 23.6 Q10.3 23.6 9.8 21.5 Q9.4 19 10.7 18.5 L10.7 15 C10.7 9.5 14 5.7 20 5.7 Z" fill="#f3f3f3"/><rect y="28" width="40" height="12" fill="url(#bd)"/><path d="M16.4 33.8 v2.8 h7.2 v-2.8" stroke="#e6e6e6" stroke-width="1" fill="none"/><path d="M20 35.2 v-3.6" stroke="#e6e6e6" stroke-width="1.2"/><path d="M18.1 32.6 L20 30.7 L21.9 32.6 Z" fill="#e6e6e6"/></g></svg></div>
<div class="td" style="left:189px;top:651px;">15712148006</div>
<div class="td" style="left:339px;top:651px;">战狼</div>
<div class="td" style="left:468px;top:651px;">9.78</div>
<div class="td" style="left:573px;top:651px;">1</div>
<div class="td" style="left:649px;top:651px;">启用</div>
<div class="td" style="left:724px;top:651px;">无效</div>
<div class="td" style="left:800px;top:651px;">2025-07-31 17:02:20</div>
<div class="td" style="left:1006px;top:651px;">2025-07-31 20:10:46</div>
<div class="td" style="left:1213px;top:651px;">119.123.59.213</div>
<div class="td" style="left:1386px;top:651px;">13471825137</div>
<div class="btn g" style="left:1535px;top:650px;width:34px">编辑</div>
<div class="btn r" style="left:1583px;top:650px;width:34px">删除</div>
<div class="btn g" style="left:1631px;top:650px;width:46px">群禁言</div>
<div class="td" style="left:1682px;top:650px">1</div>
<div class="td" style="left:36px;top:710px;">1428</div>
<div class="av" style="left:98px;top:700px"><svg width="40" height="40" viewBox="0 0 40 40"><rect width="40" height="40" fill="#f2f2f2"/><circle cx="20" cy="20" r="20" fill="#fafafa"/><defs><clipPath id="cc"><circle cx="20" cy="20" r="19.3"/></clipPath><linearGradient id="bd" x1="0" x2="1"><stop offset="0" stop-color="#5e5e5e"/><stop offset="0.5" stop-color="#727272"/><stop offset="1" stop-color="#5e5e5e"/></linearGradient></defs><g clip-path="url(#cc)"><rect width="40" height="40" fill="#cbcbcb"/><path d="M20 5.7 C26 5.7 29.3 9.5 29.3 15 L29.3 18.5 Q30.6 19 30.2 21.5 Q29.7 23.6 28.2 23.6 Q27.2 26.5 26.2 28 L13.8 28 Q12.8 26.5 11.8 23.6 Q10.3 23.6 9.8 21.5 Q9.4 19 10.7 18.5 L10.7 15 C10.7 9.5 14 5.7 20 5.7 Z" fill="#f3f3f3"/><rect y="28" width="40" height="12" fill="url(#bd)"/><path d="M16.4 33.8 v2.8 h7.2 v-2.8" stroke="#e6e6e6" stroke-width="1" fill="none"/><path d="M20 35.2 v-3.6" stroke="#e6e6e6" stroke-width="1.2"/><path d="M18.1 32.6 L20 30.7 L21.9 32.6 Z" fill="#e6e6e6"/></g></svg></div>
<div class="td" style="left:189px;top:710px;">13696003254</div>
<div class="td" style="left:339px;top:710px;">嘟嘟的</div>
<div class="td" style="left:468px;top:710px;">106.62</div>
<div class="td" style="left:573px;top:710px;">1</div>
<div class="td" style="left:649px;top:710px;">启用</div>
<div class="td" style="left:724px;top:710px;">无效</div>
<div class="td" style="left:800px;top:710px;">2025-07-31 16:49:21</div>
<div class="td" style="left:1006px;top:710px;">2025-07-31 20:01:17</div>
<div class="td" style="left:1213px;top:710px;">101.44.81.190</div>
<div class="td" style="left:1386px;top:710px;">13909090303</div>
<div class="btn g" style="left:1535px;top:709px;width:34px">编辑</div>
<div class="btn r" style="left:1583px;top:709px;width:34px">删除</div>
<div class="btn g" style="left:1631px;top:709px;width:46px">群禁言</div>
<div class="td" style="left:1682px;top:709px">1</div>
<div class="td" style="left:36px;top:769px;">1427</div>
<div class="av" style="left:98px;top:759px"><svg width="40" height="40" viewBox="0 0 40 40"><rect width="40" height="40" fill="#f2f2f2"/><circle cx="20" cy="20" r="20" fill="#fafafa"/><defs><clipPath id="cc"><circle cx="20" cy="20" r="19.3"/></clipPath><linearGradient id="bd" x1="0" x2="1"><stop offset="0" stop-color="#5e5e5e"/><stop offset="0.5" stop-color="#727272"/><stop offset="1" stop-color="#5e5e5e"/></linearGradient></defs><g clip-path="url(#cc)"><rect width="40" height="40" fill="#cbcbcb"/><path d="M20 5.7 C26 5.7 29.3 9.5 29.3 15 L29.3 18.5 Q30.6 19 30.2 21.5 Q29.7 23.6 28.2 23.6 Q27.2 26.5 26.2 28 L13.8 28 Q12.8 26.5 11.8 23.6 Q10.3 23.6 9.8 21.5 Q9.4 19 10.7 18.5 L10.7 15 C10.7 9.5 14 5.7 20 5.7 Z" fill="#f3f3f3"/><rect y="28" width="40" height="12" fill="url(#bd)"/><path d="M16.4 33.8 v2.8 h7.2 v-2.8" stroke="#e6e6e6" stroke-width="1" fill="none"/><path d="M20 35.2 v-3.6" stroke="#e6e6e6" stroke-width="1.2"/><path d="M18.1 32.6 L20 30.7 L21.9 32.6 Z" fill="#e6e6e6"/></g></svg></div>
<div class="td" style="left:189px;top:769px;">15881592012</div>
<div class="td" style="left:339px;top:769px;">一起向钱进</div>
<div class="td" style="left:468px;top:769px;">106.30</div>
<div class="td" style="left:573px;top:769px;">1</div>
<div class="td" style="left:649px;top:769px;">启用</div>
<div class="td" style="left:724px;top:769px;">无效</div>
<div class="td" style="left:800px;top:769px;">2025-07-31 16:21:53</div>
<div class="td" style="left:1006px;top:769px;">2025-07-31 20:37:51</div>
<div class="td" style="left:1213px;top:769px;">112.45.187.192</div>
<div class="td" style="left:1386px;top:769px;">13909090303</div>
<div class="btn g" style="left:1535px;top:768px;width:34px">编辑</div>
<div class="btn r" style="left:1583px;top:768px;width:34px">删除</div>
<div class="btn g" style="left:1631px;top:768px;width:46px">群禁言</div>
<div class="td" style="left:1682px;top:768px">1</div>
<div class="td" style="left:36px;top:828px;">1426</div>
<div class="av" style="left:98px;top:818px"><svg class="ph40" width="40" height="40" viewBox="0 0 40 40"><defs><linearGradient id="g5" x1="0" x2="1"><stop offset="0" stop-color="#6e787c"/><stop offset="0.55" stop-color="#9aa4a8"/><stop offset="1" stop-color="#c2cacd"/></linearGradient><radialGradient id="h5" cx="0.85" cy="0.12" r="0.3"><stop offset="0" stop-color="#e8eef0"/><stop offset="1" stop-color="#e8eef0" stop-opacity="0"/></radialGradient></defs><rect width="40" height="40" fill="url(#g5)"/><rect width="40" height="40" fill="url(#h5)"/><path d="M2 40 L4.5 22 Q10 19 15 17 L20 27 L25 22 L35 19 L33 40 Z" fill="#0b0c0d"/><path d="M15 17 Q15 11 18 9 L25 10 Q26 15 24 18 L21 27 Z" fill="#8c9698"/><path d="M13.5 7 Q14 0 22 0.5 Q29 1 28.5 8 Q27 11 25 10 Q21 6 16 10 Z" fill="#0a0a0a"/><rect x="28" y="10.5" width="5" height="9.5" rx="0.6" fill="#141414"/><path d="M23 26 Q25 20 29 19 L33 20 L31 24 Q27 25 25 27 Z" fill="#9aa2a4"/></svg></div>
<div class="td" style="left:189px;top:828px;">15968959100</div>
<div class="td" style="left:339px;top:828px;">富少</div>
<div class="td" style="left:468px;top:828px;">8.79</div>
<div class="td" style="left:573px;top:828px;">1</div>
<div class="td" style="left:649px;top:828px;">启用</div>
<div class="td" style="left:724px;top:828px;">无效</div>
<div class="td" style="left:800px;top:828px;">2025-07-31 16:01:05</div>
<div class="td" style="left:1006px;top:828px;">2025-07-31 23:20:08</div>
<div class="td" style="left:1213px;top:828px;">111.55.204.136</div>
<div class="td" style="left:1386px;top:828px;">13471825137</div>
<div class="btn g" style="left:1535px;top:827px;width:34px">编辑</div>
<div class="btn r" style="left:1583px;top:827px;width:34px">删除</div>
<div class="btn g" style="left:1631px;top:827px;width:46px">群禁言</div>
<div class="td" style="left:1682px;top:827px">1</div>
<div class="hl" style="top:120px"></div>
<div class="hl" style="top:159px"></div>
<div class="hl" style="top:218px"></div>
<div class="hl" style="top:277px"></div>
<div class="hl" style="top:336px"></div>
<div class="hl" style="top:395px"></div>
<div class="hl" style="top:454px"></div>
<div class="hl" style="top:513px"></div>
<div class="hl" style="top:572px"></div>
<div class="hl" style="top:631px"></div>
<div class="hl" style="top:690px"></div>
<div class="hl" style="top:749px"></div>
<div class="hl" style="top:808px"></div>
<div class="hl" style="top:867px"></div>
<div class="vl" style="left:20px"></div>
<div class="vl" style="left:82px"></div>
<div class="vl" style="left:173px"></div>
<div class="vl" style="left:323px"></div>
<div class="vl" style="left:452px"></div>
<div class="vl" style="left:557px"></div>
<div class="vl" style="left:633px"></div>
<div class="vl" style="left:708px"></div>
<div class="vl" style="left:784px"></div>
<div class="vl" style="left:990px"></div>
<div class="vl" style="left:1197px"></div>
<div class="vl" style="left:1370px"></div>
<div class="vl" style="left:1519px"></div>
<div class="vl" style="left:1756px"></div>
</div>
<div id="sb"><div id="thumb"></div></div>
<div id="foot"></div>
</div>
</body></html>
